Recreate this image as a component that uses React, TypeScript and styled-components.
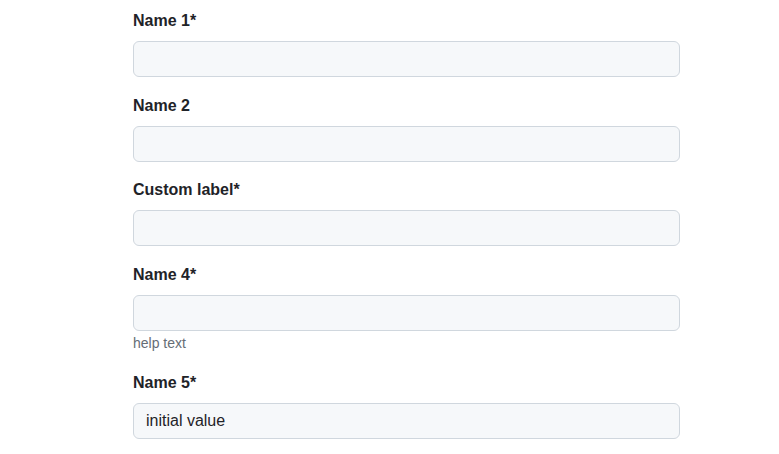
import { createGlobalStyle, styled } from 'styled-components';

const GlobalStyle = createGlobalStyle`
  html, body {
    margin: 0;
    padding: 0;
    background: #ffffff;
  }

  body {
    font-family: "Liberation Sans", Arial, sans-serif;
    color: #1f2328;
  }
`;

const Form = styled.form`
  display: flex;
  flex-direction: column;
  width: 547px;
  margin-left: 133px;
  padding-top: 9px;
`;

const Field = styled.div`
  display: flex;
  flex-direction: column;
  margin-bottom: 16.5px;
`;

const Label = styled.label`
  font-size: 16px;
  font-weight: 600;
  line-height: 24px;
  margin-bottom: 8px;
  color: #1f2328;
`;

const Input = styled.input`
  box-sizing: border-box;
  width: 100%;
  height: 36px;
  padding: 0 12px;
  border: 1px solid #d0d7de;
  border-radius: 6px;
  background: #f6f8fa;
  font-family: inherit;
  font-size: 16px;
  color: #1f2328;
  outline: none;
`;

const HelpText = styled.span`
  font-size: 14px;
  line-height: 16px;
  margin: 4px 0 4px;
  color: #656d76;
`;

interface FieldDef {
  id: string
  label: string
  required?: boolean
  help?: string
  value?: string
}

const fields: FieldDef[] = [
  { id: 'name1', label: 'Name 1', required: true },
  { id: 'name2', label: 'Name 2' },
  { id: 'name3', label: 'Custom label', required: true },
  { id: 'name4', label: 'Name 4', required: true, help: 'help text' },
  { id: 'name5', label: 'Name 5', required: true, value: 'initial value' },
];

const App = () => {
  return (
    <>
      <GlobalStyle />
      <Form onSubmit={(e) => e.preventDefault()}>
        {fields.map((f) => (
          <Field key={f.id}>
            <Label htmlFor={f.id}>
              {f.label}
              {f.required ? '*' : ''}
            </Label>
            <Input id={f.id} type="text" defaultValue={f.value ?? ''} />
            {f.help && <HelpText>{f.help}</HelpText>}
          </Field>
        ))}
      </Form>
    </>
  );
};

export default App;
